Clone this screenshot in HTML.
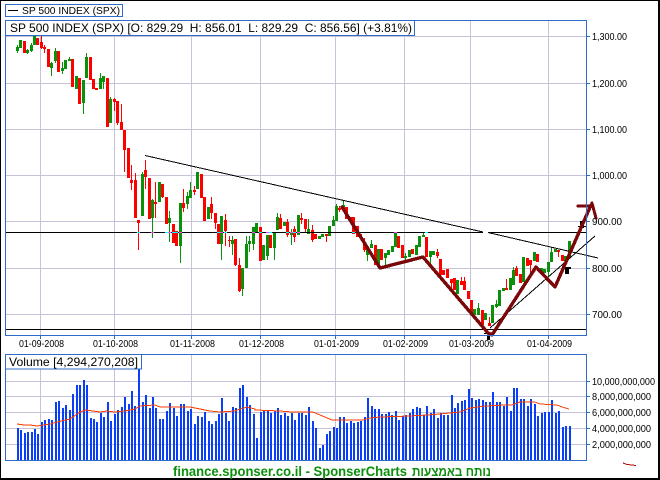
<!DOCTYPE html>
<html lang="en">
<head>
<meta charset="utf-8">
<title>SP 500 INDEX (SPX)</title>
<style>
html,body{margin:0;padding:0;background:#fff;width:660px;height:480px;overflow:hidden}
svg{display:block;position:absolute;left:0;top:0}
text{font-family:"Liberation Sans",Arial,sans-serif;fill:#000}
</style>
</head>
<body>
<svg width="660" height="480" viewBox="0 0 660 480" xmlns="http://www.w3.org/2000/svg">
<rect x="0" y="0" width="660" height="480" fill="#fff"/>

<g shape-rendering="crispEdges">
<!-- grid price -->
<path fill="none" stroke="#C6C3D8" stroke-width="1" d="M5 36.5H586M5 83.5H586M5 129.5H586M5 175.5H586M5 221.5H586M5 268.5H586M5 314.5H586M40.5 20V335M114.5 20V335M191.5 20V335M260.5 20V335M335.5 20V335M404.5 20V335M470.5 20V335M548.5 20V335"/>
<!-- grid volume -->
<path fill="none" stroke="#C6C3D8" stroke-width="1" d="M5 381.5H586M5 396.5H586M5 412.5H586M5 428.5H586M5 444.5H586M40.5 354V460M114.5 354V460M191.5 354V460M260.5 354V460M335.5 354V460M404.5 354V460M470.5 354V460M548.5 354V460"/>

<g transform="translate(.5,0)" fill="none">
<!-- green wicks -->
<path stroke="#0A900A" stroke-width="1" d="M17 45V53M27 49V54M31 43V52M51 62V76M55 48V63M62 62V74M69 57V60M83 103V114M86 53V60M100 73V80M103 82V89M110 97V100M142 172V176M152 199V238M169 211V242M180 246V263M187 192V209M190 182V192M221 244V260M232 236V255M242 289V296M246 236V245M249 236V252M253 244V250M267 256V260M274 248V260M277 213V218M291 229V245M308 219V230M333 216V221M336 204V207M343 200V206M367 255V261M371 240V245M385 258V267M405 253V260M423 233V236M430 257V265M478 303V309M496 300V308M513 267V271M548 272V277M551 247V253"/>
<!-- red wicks -->
<path stroke="#FF0000" stroke-width="1" d="M41 36V49M44 45V53M114 98V111M117 123V125M121 104V123M124 150V172M131 165V190M135 173V181M138 223V250M145 160V189M155 182V218M162 197V198M183 189V212M194 186V195M211 197V219M215 223V229M225 214V246M229 236V247M235 265V266M239 258V292M280 214V218M287 219V237M294 226V242M301 213V224M305 229V232M312 225V242M326 236V242M339 206V212M364 238V252M437 249V258M451 283V292M461 277V285M464 277V290M489 317V326M506 279V290M516 266V268M530 265V273M558 252V257"/>
<!-- green bodies -->
<path stroke="#0A900A" stroke-width="3" d="M17 47V51M20 40V48M27 50V53M31 45V51M34 36V45M51 63V68M55 51V61M62 68V71M65 60V69M69 59V61M76 76V89M83 80V103M86 57V78M100 78V89M103 76V82M110 99V123M142 174V216M152 200V218M159 182V202M169 218V223M180 203V246M187 196V204M190 190V198M197 172V189M208 207V219M221 216V244M232 240V244M242 268V289M246 244V268M249 241V244M253 227V244M256 223V232M263 245V260M267 235V256M274 232V248M277 217V230M284 222V226M291 232V235M298 215V235M308 229V234M319 236V239M322 234V237M329 226V236M333 220V226M336 206V221M343 205V208M367 248V255M371 244V248M378 249V265M385 253V258M388 250V255M392 246V252M395 233V247M405 256V258M409 250V257M416 245V255M419 236V247M423 235V237M430 251V257M433 251V255M457 280V294M474 309V315M478 308V315M485 313V320M492 305V323M496 304V307M499 290V306M503 288V291M510 278V290M513 270V285M523 257V282M534 252V261M541 268V273M544 269V273M548 262V272M551 252V262M555 249V252M565 256V261M569 241V257"/>
<!-- red bodies -->
<path stroke="#FF0000" stroke-width="3" d="M24 41V53M37 38V45M41 42V48M44 47V49M48 49V67M58 51V72M72 59V87M79 78V104M90 57V80M93 79V89M96 88V90M107 78V127M114 99V102M117 101V123M121 122V130M124 130V150M128 148V178M131 180V183M135 180V218M138 220V223M145 170V177M149 178V219M155 202V204M162 184V197M166 197V224M173 224V243M176 231V246M183 203V208M194 190V192M201 174V198M204 197V221M211 204V213M215 213V223M218 224V244M225 220V231M229 240V241M235 239V265M239 265V291M260 227V261M270 235V248M280 218V229M287 222V235M294 229V237M301 218V220M305 219V229M312 230V240M315 234V239M326 234V236M339 208V210M346 207V219M350 217V220M353 217V234M357 226V237M360 234V238M364 244V250M375 245V265M381 249V260M398 236V248M402 245V258M412 249V254M426 237V257M437 252V256M440 259V275M443 270V275M447 269V278M451 279V283M454 278V290M461 281V285M464 281V290M468 291V299M471 300V315M482 310V325M489 323V326M506 288V290M516 268V276M520 274V283M527 258V266M530 260V265M537 254V262M558 250V252M562 255V261"/>
</g>

<!-- horizontal black lines -->
<path fill="none" stroke="#000" stroke-width="1" d="M5 232.5H483M488 232.5H586M5 329.5H586"/>
<!-- xor pixels on horizontal line -->
<g transform="translate(.5,0)" fill="none" stroke-width="3">
<path stroke="#00FFFF" d="M138 232v1M166 232v1M173 232v1M176 232v1M218 232v1M225 232v1M260 232v1M270 232v1M287 232v1M294 232v1M353 232v1M426 232v1"/>
<path stroke="#FF40FF" d="M152 232v1M169 232v1M180 232v1M221 232v1M253 232v1M267 232v1M291 232v1M298 232v1M395 232v1"/>
</g>

<!-- trendlines -->
<path fill="none" stroke="#000" stroke-width="1" d="M145 155.5L483 232M488 232.5L598 258M490 328L595 236"/>

<!-- small black arrows -->
<path fill="#000" d="M487 335H490V340H487ZM484 333H493V334H484ZM565 267H569V274H565ZM563 267H571V269H563ZM580 221H584V228H580ZM578 226H586V227H578Z"/>

<!-- zigzag -->
<path fill="none" stroke="#7B0808" stroke-width="3.4" stroke-linejoin="round" stroke-linecap="round" d="M342 207L380 268L423 257L488 333L492 335L536 267L555 287L591 205"/>
<path fill="none" stroke="#7B0808" stroke-width="3" stroke-linecap="round" d="M578 206H591M592 203L596 218"/>

<!-- volume bars -->
<path fill="none" stroke="#0B3FF5" stroke-width="2" d="M18 428V460M21 430V460M25 433V460M28 432V460M32 432V460M35 429V460M38 434V460M42 422V460M45 420V460M49 419V460M52 420V460M56 402V460M59 401V460M63 408V460M66 405V460M70 410V460M73 394V460M77 385V460M80 385V460M84 380V460M87 385V460M91 418V460M94 419V460M97 422V460M101 413V460M104 417V460M108 402V460M111 421V460M115 414V460M118 410V460M122 407V460M125 397V460M129 404V460M132 391V460M135 406V460M139 369V460M143 402V460M146 395V460M150 408V460M153 397V460M156 408V460M160 419V460M163 419V460M167 411V460M170 403V460M174 408V460M177 416V460M181 404V460M184 404V460M188 411V460M191 409V460M195 424V460M198 416V460M202 417V460M205 412V460M209 421V460M212 424V460M216 421V460M219 414V460M222 398V460M226 413V460M229 421V460M233 407V460M236 408V460M240 388V460M243 385V460M247 397V460M250 405V460M254 414V460M257 438V460M261 412V460M264 411V460M268 411V460M271 413V460M275 411V460M278 408V460M281 415V460M285 413V460M288 416V460M292 413V460M295 420V460M299 413V460M302 413V460M306 415V460M309 407V460M313 421V460M316 428V460M320 448V460M323 445V460M327 434V460M330 431V460M334 427V460M337 428V460M340 417V460M344 417V460M347 423V460M351 421V460M354 423V460M358 422V460M361 421V460M365 417V460M368 398V460M372 406V460M375 409V460M379 409V460M382 414V460M386 414V460M389 412V460M392 415V460M396 411V460M399 420V460M403 416V460M406 415V460M410 413V460M413 409V460M417 407V460M420 408V460M424 415V460M427 406V460M431 413V460M434 409V460M438 418V460M441 413V460M444 415V460M448 415V460M452 395V460M455 408V460M458 403V460M462 401V460M465 400V460M469 389V460M472 398V460M476 400V460M479 399V460M483 400V460M486 402V460M490 402V460M493 392V460M497 402V460M500 402V460M504 406V460M507 397V460M511 411V460M514 388V460M517 388V460M521 399V460M524 399V460M528 406V460M531 399V460M535 404V460M538 416V460M542 413V460M545 412V460M549 412V460M552 400V460M556 413V460M559 411V460M563 427V460M566 426V460M570 426V460"/>

<!-- volume MA -->
<path fill="none" stroke="#FF3C00" stroke-width="1" d="M17 424L24 425L30 425L37 426L43 425L50 424L57 422L70 419L80 412L86 410L100 412L107 411L115 412L125 411L135 409L140 406L155 405L160 407L190 407L200 409L210 411L220 412L235 411L240 409L247 407L255 409L255 410L280 411L292 412L313 412L320 415L332 420L363 420L370 418L380 417L410 416L427 415L440 414L450 413L460 412L470 408L485 406L505 405L512 405L520 402L535 402L540 404L557 405L562 407L569 409"/>

<!-- small red mark -->
<path fill="none" stroke="#B00000" stroke-width="1" d="M623 463L627 464.5L636 465.5"/>

<!-- chart frames -->
<g fill="none" stroke="#2F6BCB" stroke-width="1">
<rect x="5.5" y="20.5" width="581" height="315"/>
<rect x="5.5" y="354.5" width="581" height="106"/>
<path d="M587 36.5H590M587 83.5H590M587 129.5H590M587 175.5H590M587 221.5H590M587 268.5H590M587 314.5H590M587 381.5H590M587 396.5H590M587 412.5H590M587 428.5H590M587 444.5H590M40.5 335V339M114.5 335V339M191.5 335V339M260.5 335V339M335.5 335V339M404.5 335V339M470.5 335V339M548.5 335V339"/>
</g>
<rect x="5.5" y="4.5" width="117" height="12" fill="#fff" stroke="#2F6BCB"/>
<rect x="5.5" y="20.5" width="409" height="15" fill="#fff" stroke="#2F6BCB"/>
<rect x="5.5" y="354.5" width="136" height="14.5" fill="#fff" stroke="#2F6BCB"/>
<path d="M8 10.5H18" stroke="#000" stroke-width="1"/>

<!-- outer black border -->
<path fill="#000" d="M0 0H660V1H0ZM0 0H1V480H0ZM0 478H660V480H0ZM658 0H660V480H658Z"/>
</g>

<text x="22" y="14" font-size="10" textLength="98" lengthAdjust="spacingAndGlyphs">SP 500 INDEX (SPX)</text>
<text x="10" y="32" font-size="12" textLength="402" lengthAdjust="spacingAndGlyphs">SP 500 INDEX (SPX) [O: 829.29&#160;&#160;H: 856.01&#160;&#160;L: 829.29&#160;&#160;C: 856.56] (+3.81%)</text>
<text x="9" y="366" font-size="12" textLength="129" lengthAdjust="spacingAndGlyphs">Volume [4,294,270,208]</text>

<g font-size="10">
<text x="592" y="40" textLength="35" lengthAdjust="spacingAndGlyphs">1,300.00</text>
<text x="592" y="87" textLength="35" lengthAdjust="spacingAndGlyphs">1,200.00</text>
<text x="592" y="133" textLength="35" lengthAdjust="spacingAndGlyphs">1,100.00</text>
<text x="592" y="179" textLength="35" lengthAdjust="spacingAndGlyphs">1,000.00</text>
<text x="592" y="225" textLength="30" lengthAdjust="spacingAndGlyphs">900.00</text>
<text x="592" y="272" textLength="30" lengthAdjust="spacingAndGlyphs">800.00</text>
<text x="592" y="318" textLength="30" lengthAdjust="spacingAndGlyphs">700.00</text>

<text x="592" y="385" textLength="63" lengthAdjust="spacingAndGlyphs">10,000,000,000</text>
<text x="592" y="400" textLength="59" lengthAdjust="spacingAndGlyphs">8,000,000,000</text>
<text x="592" y="416" textLength="59" lengthAdjust="spacingAndGlyphs">6,000,000,000</text>
<text x="592" y="432" textLength="59" lengthAdjust="spacingAndGlyphs">4,000,000,000</text>
<text x="592" y="448" textLength="59" lengthAdjust="spacingAndGlyphs">2,000,000,000</text>

<text x="19" y="347" textLength="45" lengthAdjust="spacingAndGlyphs">01-09-2008</text>
<text x="93" y="347" textLength="45" lengthAdjust="spacingAndGlyphs">01-10-2008</text>
<text x="170" y="347" textLength="45" lengthAdjust="spacingAndGlyphs">01-11-2008</text>
<text x="239" y="347" textLength="45" lengthAdjust="spacingAndGlyphs">01-12-2008</text>
<text x="314" y="347" textLength="45" lengthAdjust="spacingAndGlyphs">01-01-2009</text>
<text x="383" y="347" textLength="45" lengthAdjust="spacingAndGlyphs">01-02-2009</text>
<text x="449" y="347" textLength="45" lengthAdjust="spacingAndGlyphs">01-03-2009</text>
<text x="527" y="347" textLength="45" lengthAdjust="spacingAndGlyphs">01-04-2009</text>
</g>

<g font-size="14" font-weight="bold">
<text x="173" y="476" style="fill:#0A900A" textLength="234" lengthAdjust="spacingAndGlyphs">finance.sponser.co.il - SponserCharts</text>
<text x="412" y="476" font-size="13" style="fill:#0A900A" textLength="79" lengthAdjust="spacingAndGlyphs">נותח באמצעות</text>
</g>
</svg>
</body>
</html>
